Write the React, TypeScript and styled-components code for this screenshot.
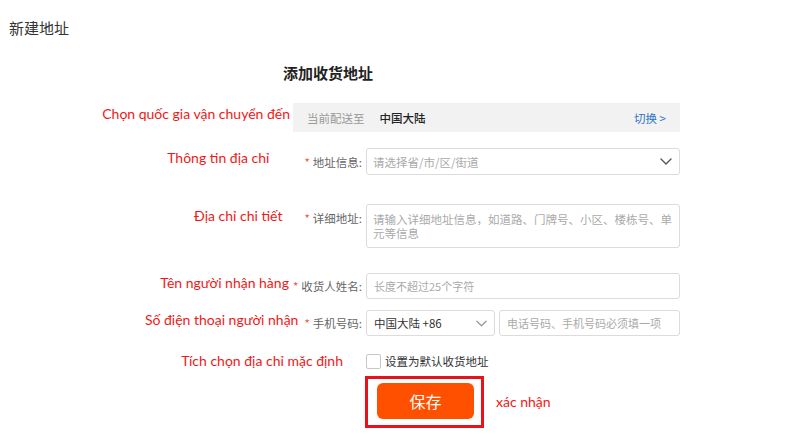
import React, { useState } from 'react';
import styled, { createGlobalStyle } from 'styled-components';

// Estilos globais
const GlobalStyle = createGlobalStyle`
  html, body {
    margin: 0;
    padding: 0;
    background: #fff;
  }
  body {
    font-family: "Noto Sans CJK SC", "Liberation Sans", sans-serif;
    color: #333;
  }
`;

const Chevron = ({ color, width }: { color: string; width: number }) => (
  <svg width={width} height={7} viewBox="0 0 12 7" fill="none">
    <path d="M1 1l5 5 5-5" stroke={color} strokeWidth="1.4" strokeLinecap="round" strokeLinejoin="round" />
  </svg>
);

const App: React.FC = () => {
  const [padrao, setPadrao] = useState(false);

  return (
    <Page>
      <GlobalStyle />
      <PageTitle>新建地址</PageTitle>

      <Form>
        <SubTitle>添加收货地址</SubTitle>

        {/* país de entrega */}
        <Row $mt={20} $h={29}>
          <Side $w={293}>
            <Note $up={4} $mr={3}>Chọn quốc gia vận chuyển đến</Note>
          </Side>
          <CountryBar>
            <Muted>当前配送至</Muted>
            <Country>中国大陆</Country>
            <SwitchLink>切换 &gt;</SwitchLink>
          </CountryBar>
        </Row>

        {/* endereço */}
        <Row $mt={16} $h={27}>
          <Side>
            <Note $up={4} $mr={35}>Thông tin địa chỉ</Note>
            <Label><Star>*</Star>地址信息:</Label>
          </Side>
          <Field>
            <SelectBox>
              <Placeholder>请选择省/市/区/街道</Placeholder>
              <Chevron color="#555" width={12} />
            </SelectBox>
          </Field>
        </Row>

        {/* endereço detalhado */}
        <Row $mt={29} $h={44} $top>
          <Side $top>
            <Note $mr={22} $mt={2}>Địa chỉ chi tiết</Note>
            <Label $mt={7}><Star>*</Star>详细地址:</Label>
          </Side>
          <Field>
            <TextArea placeholder="请输入详细地址信息，如道路、门牌号、小区、楼栋号、单元等信息" />
          </Field>
        </Row>

        {/* nome */}
        <Row $mt={25} $h={26}>
          <Side>
            <Note $up={3} $mr={4}>Tên người nhận hàng</Note>
            <Label><Star>*</Star>收货人姓名:</Label>
          </Side>
          <Field>
            <Input placeholder="长度不超过25个字符" />
          </Field>
        </Row>

        {/* telefone */}
        <Row $mt={11} $h={26}>
          <Side>
            <Note $up={3} $mr={6}>Số điện thoại người nhận</Note>
            <Label><Star>*</Star>手机号码:</Label>
          </Side>
          <Field>
            <PhoneGroup>
              <CodeSelect>
                <span>中国大陆 +86</span>
                <Chevron color="#999" width={11} />
              </CodeSelect>
              <Input placeholder="电话号码、手机号码必须填一项" />
            </PhoneGroup>
          </Field>
        </Row>

        {/* padrão */}
        <Row $mt={16} $h={18}>
          <Side>
            <Note $mr={19}>Tích chọn địa chỉ mặc định</Note>
          </Side>
          <Field>
            <CheckLabel>
              <CheckBox checked={padrao} onChange={() => setPadrao(!padrao)} />
              设置为默认收货地址
            </CheckLabel>
          </Field>
        </Row>

        {/* salvar */}
        <Row $mt={6} $h={52}>
          <Side $w={365} />
          <Highlight>
            <SaveButton>保存</SaveButton>
          </Highlight>
          <Note $ml={12}>xác nhận</Note>
        </Row>
      </Form>
    </Page>
  );
};

export default App;

// Estilos
const Page = styled.div`
  width: 800px;
  height: 434px;
  overflow: hidden;
  background: #fff;
`;

const PageTitle = styled.div`
  padding: 18px 0 0 9px;
  font-size: 15px;
  line-height: 20px;
  color: #333;
`;

const Form = styled.div`
  display: flex;
  flex-direction: column;
`;

const SubTitle = styled.div`
  margin-top: 25px;
  padding-left: 283px;
  font-size: 15px;
  line-height: 20px;
  font-weight: bold;
  color: #222;
`;

const Row = styled.div<{ $mt: number; $h: number; $top?: boolean }>`
  display: flex;
  align-items: ${(p) => (p.$top ? 'flex-start' : 'center')};
  margin-top: ${(p) => p.$mt}px;
  height: ${(p) => p.$h}px;
`;

const Side = styled.div<{ $w?: number; $top?: boolean }>`
  flex-shrink: 0;
  width: ${(p) => p.$w ?? 362}px;
  display: flex;
  justify-content: flex-end;
  align-items: ${(p) => (p.$top ? 'flex-start' : 'center')};
`;

const Note = styled.span<{ $up?: number; $mr?: number; $ml?: number; $mt?: number }>`
  font-family: Lato, "Open Sans", sans-serif;
  font-size: 14px;
  line-height: 20px;
  color: #f01818;
  white-space: nowrap;
  margin-right: ${(p) => p.$mr ?? 0}px;
  margin-left: ${(p) => p.$ml ?? 0}px;
  margin-top: ${(p) => p.$mt ?? 0}px;
  margin-bottom: ${(p) => (p.$up ?? 0) * 2}px;
`;

const Label = styled.span<{ $mt?: number }>`
  font-size: 11.5px;
  line-height: 14px;
  color: #666;
  white-space: nowrap;
  margin-top: ${(p) => p.$mt ?? 0}px;
`;

const Star = styled.span`
  color: #f4553b;
  margin-right: 3px;
`;

const Field = styled.div`
  margin-left: 4px;
  width: 314px;
  height: 100%;
  display: flex;
`;

const CountryBar = styled.div`
  width: 387px;
  height: 100%;
  box-sizing: border-box;
  padding: 0 14px;
  background: #f2f2f2;
  display: flex;
  align-items: center;
  font-size: 11.5px;
`;

const Muted = styled.span`
  color: #999;
`;

const Country = styled.span`
  margin-left: 15px;
  color: #222;
  font-weight: 500;
`;

const SwitchLink = styled.span`
  margin-left: auto;
  color: #2f74c8;
`;

const SelectBox = styled.div`
  flex: 1;
  box-sizing: border-box;
  border: 1px solid #dcdcdc;
  border-radius: 3px;
  padding: 0 7px 0 6px;
  display: flex;
  align-items: center;
  justify-content: space-between;
`;

const Placeholder = styled.span`
  font-size: 11.5px;
  color: #aaa;
`;

const TextArea = styled.textarea`
  flex: 1;
  box-sizing: border-box;
  resize: none;
  overflow: hidden;
  border: 1px solid #dcdcdc;
  border-radius: 3px;
  padding: 7px 3px 6px 6px;
  font-family: inherit;
  font-size: 11.5px;
  line-height: 14px;
  outline: none;
  &::placeholder {
    color: #aaa;
  }
`;

const Input = styled.input`
  flex: 1;
  min-width: 0;
  box-sizing: border-box;
  border: 1px solid #dcdcdc;
  border-radius: 3px;
  padding: 0 7px;
  font-family: inherit;
  font-size: 11px;
  outline: none;
  &::placeholder {
    color: #aaa;
  }
`;

const PhoneGroup = styled.div`
  flex: 1;
  display: flex;
  gap: 4px;
`;

const CodeSelect = styled.div`
  width: 129px;
  flex-shrink: 0;
  box-sizing: border-box;
  border: 1px solid #dcdcdc;
  border-radius: 3px;
  padding: 0 7px 0 7px;
  display: flex;
  align-items: center;
  justify-content: space-between;
  font-size: 11.5px;
  color: #333;
`;

const CheckLabel = styled.label`
  display: flex;
  align-items: center;
  gap: 4px;
  font-size: 11.5px;
  color: #333;
`;

const CheckBox = styled.input.attrs({ type: 'checkbox' })`
  appearance: none;
  margin: 0;
  width: 15px;
  height: 15px;
  box-sizing: border-box;
  border: 1px solid #c8c8c8;
  border-radius: 2px;
  background: #fff;
  &:checked {
    background: #ff5000;
    border-color: #ff5000;
  }
`;

const Highlight = styled.div`
  width: 119px;
  height: 52px;
  box-sizing: border-box;
  border: 3px solid #e8121c;
  padding: 4px 7px 6px 9px;
  display: flex;
`;

const SaveButton = styled.button`
  flex: 1;
  border: none;
  border-radius: 6px;
  background: #ff5000;
  color: #fff;
  font-family: inherit;
  font-size: 16px;
  cursor: pointer;
`;
